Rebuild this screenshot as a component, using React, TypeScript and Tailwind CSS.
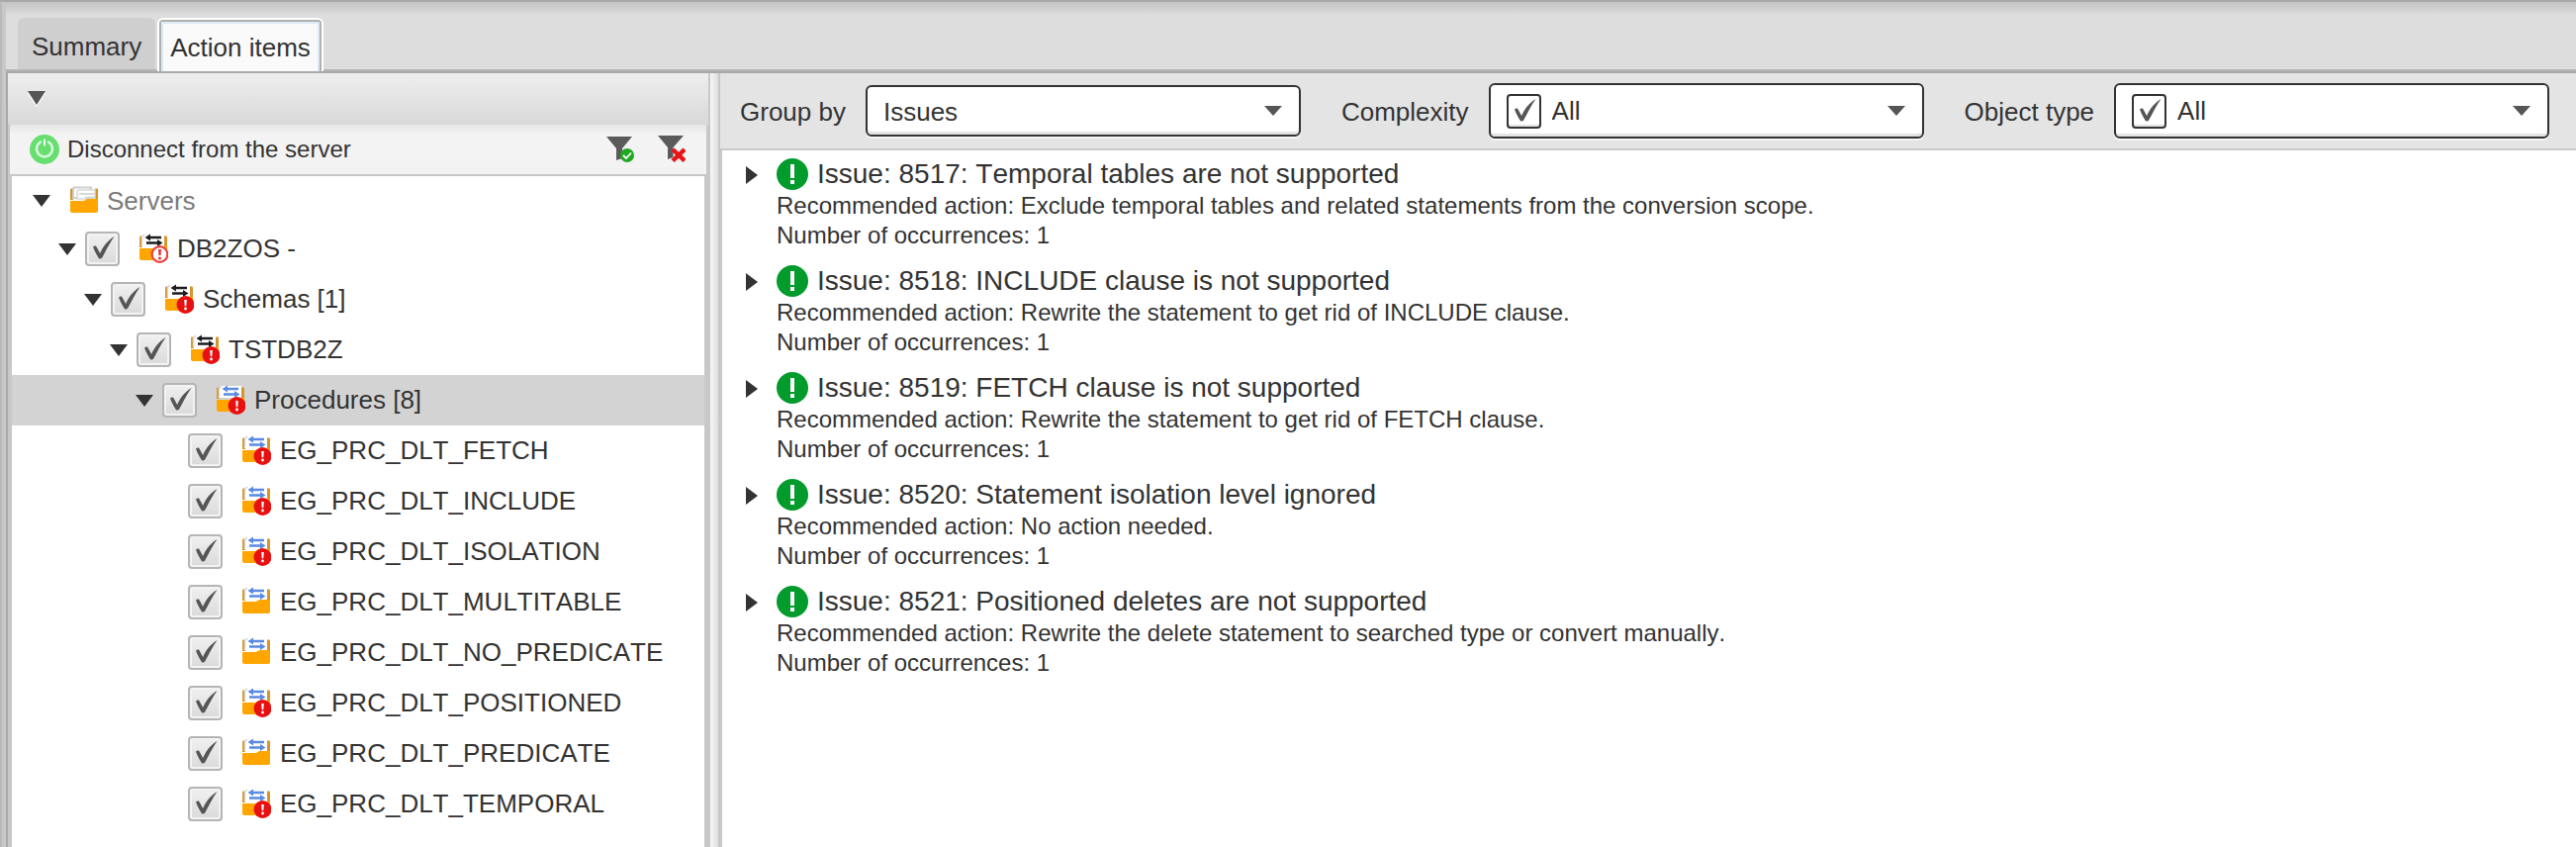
import { useState } from 'react';
import type { ReactNode } from 'react';

type Badge = 'none' | 'error' | 'outline';

interface TreeNode {
  name: string;
  level: number;
  arrows: 'black' | 'blue';
  badge: Badge;
  expandable: boolean;
}

interface Issue {
  code: number;
  title: string;
  action: string;
  occurrences: number;
}

const nodes: TreeNode[] = [
  { name: 'DB2ZOS -', level: 1, arrows: 'black', badge: 'outline', expandable: true },
  { name: 'Schemas [1]', level: 2, arrows: 'black', badge: 'error', expandable: true },
  { name: 'TSTDB2Z', level: 3, arrows: 'black', badge: 'error', expandable: true },
  { name: 'Procedures [8]', level: 4, arrows: 'blue', badge: 'error', expandable: true },
  { name: 'EG_PRC_DLT_FETCH', level: 5, arrows: 'blue', badge: 'error', expandable: false },
  { name: 'EG_PRC_DLT_INCLUDE', level: 5, arrows: 'blue', badge: 'error', expandable: false },
  { name: 'EG_PRC_DLT_ISOLATION', level: 5, arrows: 'blue', badge: 'error', expandable: false },
  { name: 'EG_PRC_DLT_MULTITABLE', level: 5, arrows: 'blue', badge: 'none', expandable: false },
  { name: 'EG_PRC_DLT_NO_PREDICATE', level: 5, arrows: 'blue', badge: 'none', expandable: false },
  { name: 'EG_PRC_DLT_POSITIONED', level: 5, arrows: 'blue', badge: 'error', expandable: false },
  { name: 'EG_PRC_DLT_PREDICATE', level: 5, arrows: 'blue', badge: 'none', expandable: false },
  { name: 'EG_PRC_DLT_TEMPORAL', level: 5, arrows: 'blue', badge: 'error', expandable: false },
];

const issues: Issue[] = [
  {
    code: 8517,
    title: 'Temporal tables are not supported',
    action: 'Exclude temporal tables and related statements from the conversion scope.',
    occurrences: 1,
  },
  {
    code: 8518,
    title: 'INCLUDE clause is not supported',
    action: 'Rewrite the statement to get rid of INCLUDE clause.',
    occurrences: 1,
  },
  {
    code: 8519,
    title: 'FETCH clause is not supported',
    action: 'Rewrite the statement to get rid of FETCH clause.',
    occurrences: 1,
  },
  {
    code: 8520,
    title: 'Statement isolation level ignored',
    action: 'No action needed.',
    occurrences: 1,
  },
  {
    code: 8521,
    title: 'Positioned deletes are not supported',
    action: 'Rewrite the delete statement to searched type or convert manually.',
    occurrences: 1,
  },
];

const indents = ['pl-[21px]', 'pl-[47px]', 'pl-[73px]', 'pl-[99px]', 'pl-[125px]', 'pl-[151px]'];

const ArrowDown = () => (
  <svg width="18" height="12" viewBox="0 0 18 12" className="shrink-0">
    <path d="M0 0H18L9 12Z" fill="#333" />
  </svg>
);

const Folder = ({ arrows, badge }: { arrows?: 'black' | 'blue'; badge: Badge }) => {
  const color = arrows === 'blue' ? '#5a8ae2' : '#1c1c1c';

  return (
    <svg width="30" height="30" viewBox="0 0 30 30" className="shrink-0">
      <path d="M1 3.5Q1 2.5 2 2.5H4V14H1Z" fill="#d6962a" />
      <path d="M26 2.5H28Q29 2.5 29 3.5V14H26Z" fill="#d6962a" />
      {arrows ? (
        <>
          <path d="M5 1H26V13H3V3Z" fill="#fff" />
          <path d="M3.5 12V3.5L6 1" stroke="#d5d5d5" strokeWidth="1.5" fill="none" />
          <g fill={color}>
            <path d="M6.5 4L12 0.5V2.7H23V5.3H12V7.5Z" />
            <path d="M24.5 9.5L19 6V8.2H8V10.800H19V13Z" />
          </g>
        </>
      ) : (
        <>
          <path d="M4 12V3Q4 1.5 5.5 1.5H22V12Z" fill="#fff" stroke="#cfcfcf" strokeWidth="2" />
          <path d="M8 12V6Q8 4 10 4H26V13H8Z" fill="#fff" stroke="#d8d8d8" strokeWidth="1.5" />
          <path d="M10 8H25M16 11.5H25" stroke="#cdcdcd" strokeWidth="1.5" />
        </>
      )}
      <path d="M1 15.5Q1 15 1.5 15H14Q15.5 15 16.5 14Q17.5 13 19 13H28.5Q29 13 29 13.5V25Q29 27 27 27H3Q1 27 1 25Z" fill="#ffa500" />
      {badge === 'error' && (
        <>
          <circle cx="21.5" cy="21" r="9" fill="#e81010" />
          <path d="M20.2 16H22.8L22.3 22.3H20.7Z" fill="#fff" />
          <circle cx="21.5" cy="25" r="1.4" fill="#fff" />
        </>
      )}
      {badge === 'outline' && (
        <>
          <circle cx="21.5" cy="21" r="7.8" fill="#fff" stroke="#ee4040" strokeWidth="2.2" />
          <path d="M20 16H23L22.5 22.3H20.5Z" fill="#e83030" />
          <circle cx="21.5" cy="25" r="1.5" fill="#e83030" />
        </>
      )}
    </svg>
  );
};

const CheckBox = ({ label, dark = false }: { label: string; dark?: boolean }) => (
  <span className="grid shrink-0">
    <input
      type="checkbox"
      defaultChecked
      aria-label={label}
      className={`peer [grid-area:1/1] appearance-none size-[35px] rounded-[4px] border-2 ${
        dark
          ? 'border-[#333] bg-white shadow-[inset_0_-2px_1px_#e2e2e2]'
          : 'border-[#b5b5b5] bg-linear-to-b from-[#f0f0f0] to-[#dadada] shadow-[inset_0_0_0_2px_#f3f3f3]'
      }`}
    />
    <svg
      width="35"
      height="35"
      viewBox="0 0 35 35"
      className="[grid-area:1/1] pointer-events-none invisible peer-checked:visible"
    >
      <path
        d="M8 15.5Q9.5 14 11 14.5C12.500 17 13.800 19.800 15.200 22C18 15.500 22 9.500 29.500 5C25 11.500 21 19.500 17 26.800Q15.500 28.200 14 27.200C12 24 9.500 20 8 15.500Z"
        fill="#555"
      />
    </svg>
  </span>
);

const ComboArrow = () => (
  <svg
    width="18"
    height="10"
    viewBox="0 0 18 10"
    className="absolute right-[17px] top-1/2 -translate-y-1/2 pointer-events-none"
  >
    <path d="M0 0H18L9 10Z" fill="#555" />
  </svg>
);

interface FilterProps {
  id: string;
  label: string;
  options: string[];
  tall?: boolean;
  children?: ReactNode;
}

const Filter = ({ id, label, options, tall = false, children }: FilterProps) => (
  <div className="flex items-center gap-5">
    <label htmlFor={id} className="pt-0.5 whitespace-nowrap">{label}</label>
    <div
      className={`relative flex items-center w-[440px] pl-4 rounded-md border-2 border-[#333] bg-white shadow-[inset_0_-3px_1px_#e4e4e4,0_2px_0_#f6f6f6] ${
        tall ? 'h-14' : 'h-[52px]'
      }`}
    >
      {children}
      <select
        id={id}
        className={`flex-1 h-full appearance-none bg-transparent focus:outline-none ${tall ? 'pl-[11px]' : 'pt-0.5'}`}
      >
        {options.map((option) => (
          <option key={option}>{option}</option>
        ))}
      </select>
      <ComboArrow />
    </div>
  </div>
);

const Sidebar = () => {
  const [selected, setSelected] = useState('Procedures [8]');

  return (
    <aside className="flex flex-col w-[710px] shrink-0 border-r-2 border-[#c8c8c8]">
      <div className="flex items-center h-[52px] px-5 bg-linear-to-b from-[#eeeeee] to-[#d8d8d8]">
        <button aria-label="Collapse">
          <svg width="18" height="16" viewBox="0 0 18 16">
            <path d="M0 2H18L9 16Z" fill="#fff" />
            <path d="M0 0H18L9 14Z" fill="#555" />
          </svg>
        </button>
      </div>
      <div className="flex flex-col flex-1 border-x-2 border-[#c8c8c8]">
        <div className="flex items-center justify-between h-[52px] pl-5 pr-[21px] border-b-2 border-[#c8c8c8] bg-linear-to-b from-[#e6e6e6] via-[#f3f3f3] via-20% to-[#f3f3f3] text-2xl">
          <button className="flex items-center gap-2">
            <svg width="30" height="30" viewBox="0 0 30 30">
              <circle cx="15" cy="15" r="15" fill="#66df70" />
              <path d="M11 7.500A8 8 0 1 0 19 7.500" fill="none" stroke="#d9f8dc" strokeWidth="2.500" strokeLinecap="round" />
              <path d="M15 4.500V11.500" stroke="#e9fbea" strokeWidth="2" />
            </svg>
            Disconnect from the server
          </button>
          <div className="flex items-center gap-6">
            <button aria-label="Apply filter">
              <svg width="28" height="28" viewBox="0 0 28 28">
                <path d="M0 1H26L16 13V23L10 25V13Z" fill="#5a5a5a" />
                <circle cx="21" cy="20" r="7" fill="#22a922" />
                <path d="M17 20L20 23L25 17.5" fill="none" stroke="#fff" strokeWidth="1.8" />
              </svg>
            </button>
            <button aria-label="Clear filter">
              <svg width="28" height="28" viewBox="0 0 28 28">
                <path d="M0 0H26L15.5 12V22L10 24V12Z" fill="#5a5a5a" />
                <path d="M15 14L27 25.500M27 14L15 25.500" stroke="#e81418" strokeWidth="4.5" />
              </svg>
            </button>
          </div>
        </div>
        <ul className="flex-1 border-x-2 border-[#c8c8c8] bg-white">
          <li className="flex items-center h-12 gap-[19px] pt-0.5 pl-[21px]">
            <ArrowDown />
            <span className="flex items-center gap-2 text-[#7a7a7a]">
              <Folder badge="none" />
              Servers
            </span>
          </li>
          {nodes.map((node) => (
            <li
              key={node.name}
              onClick={() => setSelected(node.name)}
              className={`flex items-center h-[51px] ${indents[node.level]} ${selected === node.name ? 'bg-[#d3d3d3]' : ''}`}
            >
              <span className="flex items-center w-[27px] shrink-0">{node.expandable && <ArrowDown />}</span>
              <CheckBox label={node.name} />
              <span className="flex items-center gap-[9px] pl-[19px] pb-0.5 whitespace-nowrap">
                <Folder arrows={node.arrows} badge={node.badge} />
                {node.name}
              </span>
            </li>
          ))}
        </ul>
      </div>
    </aside>
  );
};

const IssueItem = ({ issue }: { issue: Issue }) => (
  <li className="flex items-start gap-[19px]">
    <button aria-label="Expand issue" className="flex items-center h-[34px] pt-0.5">
      <svg width="12" height="18" viewBox="0 0 12 18">
        <path d="M0 0L12 9L0 18Z" fill="#333" />
      </svg>
    </button>
    <div className="text-2xl leading-[30px]">
      <h3 className="flex items-center gap-[9px] text-[28px] leading-[34px]">
        <svg width="32" height="32" viewBox="0 0 32 32" className="shrink-0">
          <circle cx="16" cy="16" r="16" fill="#039b2c" />
          <path d="M14 6H18V20H14ZM14 22H18V26H14Z" fill="#fff" />
        </svg>
        Issue: {issue.code}: {issue.title}
      </h3>
      <p>Recommended action: {issue.action}</p>
      <p>Number of occurrences: {issue.occurrences}</p>
    </div>
  </li>
);

export default function App() {
  return (
    <div className="flex flex-col min-h-screen border-t-2 border-t-[#a9a9a9] border-l-2 border-l-[#b9b9b9] bg-[#c8c8c8] font-['Liberation_Sans',Arial,sans-serif] [font-kerning:none] text-[26px] leading-8 text-[#333]">
      <div className="flex items-start gap-0.5 h-[70px] ml-1 pt-4 pl-3 border-b-2 border-[#b5b5b5] bg-linear-to-b from-[#c4c4c4] via-[#dddddd] via-20% to-[#dddddd]">
        <button className="h-[52px] px-3.5 pt-1.5 rounded-t-md bg-[#cfcfcf]">Summary</button>
        <button className="relative z-10 h-[54px] rounded-t-md border-2 border-b-0 border-white">
          <span className="flex h-full rounded-t-[4px] border-2 border-b-0 border-[#b0b0b0]">
            <span className="flex items-center px-[7px] border-2 border-b-0 border-[#dcebf3] bg-[#fafafa]">
              Action items
            </span>
          </span>
        </button>
      </div>
      <div className="flex flex-1 ml-1 border-t-2 border-l-2 border-[#a9a9a9]">
        <Sidebar />
        <div className="w-2 shrink-0 bg-linear-to-r from-[#f6f6f6] to-[#dedede]" />
        <main className="flex flex-col flex-1 min-w-0 border-l-2 border-[#c8c8c8]">
          <div className="flex items-center gap-[41px] h-[78px] pl-5 border-b-2 border-[#c8c8c8] bg-[#e4e4e4]">
            <Filter id="group-by" label="Group by" options={['Issues', 'Objects']} />
            <Filter id="complexity" label="Complexity" options={['All']} tall>
              <CheckBox label="All complexities" dark />
            </Filter>
            <Filter id="object-type" label="Object type" options={['All']} tall>
              <CheckBox label="All object types" dark />
            </Filter>
          </div>
          <ul className="flex flex-col flex-1 gap-3.5 pt-[7px] pl-6 border-l-2 border-[#c8c8c8] bg-white">
            {issues.map((issue) => (
              <IssueItem key={issue.code} issue={issue} />
            ))}
          </ul>
        </main>
      </div>
    </div>
  );
}
